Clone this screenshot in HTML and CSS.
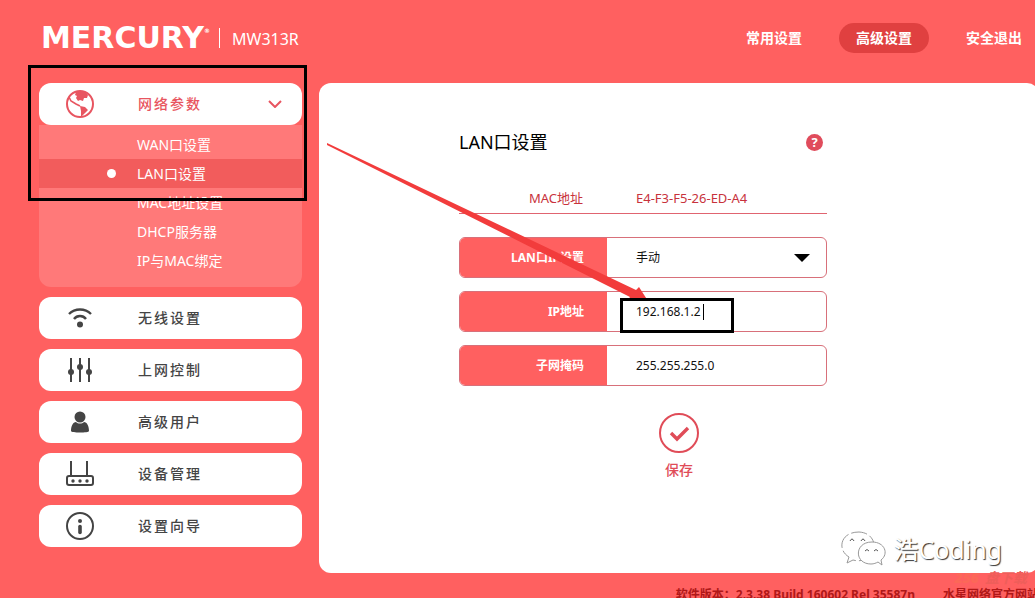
FILE: index.html
```
<!DOCTYPE html>
<html lang="zh-CN">

<head>
    <meta charset="UTF-8">
    <title>MW313R</title>
    <link rel="stylesheet" href="styles.css">
</head>

<body>
    <div class="page">
        <header class="header">
            <div class="logo">MERCURY<span class="reg">®</span></div>
            <span class="model">MW313R</span>
            <nav class="nav">
                <a href="#">常用设置</a>
                <a href="#" class="active">高级设置</a>
                <a href="#">安全退出</a>
            </nav>
        </header>

        <main class="container">
            <aside class="sidebar">
                <div class="group">
                    <button class="menu-item open">
                        <svg class="icon" viewBox="0 0 30 30">
                            <circle cx="15" cy="15" r="13" fill="none" stroke="currentColor" stroke-width="2" />
                            <path d="M11 3l8-1 4 4-1 3-3 0-1 3-3-1-2 1-2-3 1-2-2-1z" fill="currentColor" />
                            <path d="M4 8l2 4 5 3 4 2" fill="none" stroke="currentColor" stroke-width="1.600" />
                            <path d="M15 17l5 1 3 3-3 3-4 4 0-6z" fill="currentColor" />
                        </svg>
                        <span>网络参数</span>
                        <svg class="chevron" viewBox="0 0 14 8">
                            <path d="M1 1l6 6 6-6" fill="none" stroke="currentColor" stroke-width="2" />
                        </svg>
                    </button>
                    <ul class="submenu">
                        <li><a href="#">WAN口设置</a></li>
                        <li class="current"><a href="#">LAN口设置</a></li>
                        <li><a href="#">MAC地址设置</a></li>
                        <li><a href="#">DHCP服务器</a></li>
                        <li><a href="#">IP与MAC绑定</a></li>
                    </ul>
                </div>
                <button class="menu-item">
                    <svg class="icon" viewBox="0 0 30 30">
                        <path d="M4 11c6-6 16-6 22 0M9 16c3-4 9-4 12 0" fill="none" stroke="currentColor" stroke-width="2.400" />
                        <circle cx="15" cy="21.500" r="3" fill="currentColor" />
                    </svg>
                    <span>无线设置</span>
                </button>
                <button class="menu-item">
                    <svg class="icon" viewBox="0 0 30 30">
                        <path d="M6 3v24M15 3v24M24 3v24" stroke="currentColor" stroke-width="2" />
                        <circle cx="6" cy="17" r="3" fill="currentColor" />
                        <circle cx="15" cy="12" r="3" fill="currentColor" />
                        <circle cx="24" cy="17" r="3" fill="currentColor" />
                    </svg>
                    <span>上网控制</span>
                </button>
                <button class="menu-item">
                    <svg class="icon" viewBox="0 0 30 30">
                        <circle cx="15" cy="10" r="5.500" fill="currentColor" />
                        <path d="M6 24c0-5 2-9 5-9 2 2 6 2 8 0 3 0 5 4 5 9 0 2-18 2-18 0z" fill="currentColor" />
                    </svg>
                    <span>高级用户</span>
                </button>
                <button class="menu-item">
                    <svg class="icon" viewBox="0 0 30 30">
                        <path d="M6 2v15M22 2v15" stroke="currentColor" stroke-width="2" />
                        <rect x="2" y="17" width="26" height="9" rx="2" fill="none" stroke="currentColor" stroke-width="2" />
                        <circle cx="8" cy="22" r="1.700" fill="currentColor" />
                        <circle cx="15" cy="22" r="1.700" fill="currentColor" />
                        <circle cx="22" cy="22" r="1.700" fill="currentColor" />
                    </svg>
                    <span>设备管理</span>
                </button>
                <button class="menu-item">
                    <svg class="icon" viewBox="0 0 30 30">
                        <circle cx="15" cy="15" r="13" fill="none" stroke="currentColor" stroke-width="2" />
                        <circle cx="15" cy="10" r="2" fill="currentColor" />
                        <path d="M15 15.500v6" stroke="currentColor" stroke-width="3.600" stroke-linecap="round" />
                    </svg>
                    <span>设置向导</span>
                </button>
            </aside>

            <section class="panel">
                <form>
                    <div class="fields">
                        <div class="title">
                            <h1>LAN口设置</h1>
                            <button type="button" class="help" aria-label="帮助">?</button>
                        </div>
                        <div class="mac">
                            <span class="label">MAC地址</span>
                            <span class="value">E4-F3-F5-26-ED-A4</span>
                        </div>
                        <div class="field">
                            <label for="lanType">LAN口IP设置</label>
                            <select id="lanType">
                                <option>手动</option>
                                <option>自动</option>
                            </select>
                            <svg class="caret" viewBox="0 0 16 8">
                                <path d="M0 0h16L8 8z" />
                            </svg>
                        </div>
                        <div class="field">
                            <label for="lanIp">IP地址</label>
                            <input type="text" id="lanIp" value="192.168.1.2">
                        </div>
                        <div class="field">
                            <label for="lanMask">子网掩码</label>
                            <input type="text" id="lanMask" value="255.255.255.0">
                        </div>
                    </div>
                    <button type="button" class="save">
                        <svg viewBox="0 0 40 40">
                            <circle cx="20" cy="20" r="19" fill="none" stroke="currentColor" stroke-width="2" />
                            <path d="M12 20l6 6 11-11" fill="none" stroke="currentColor" stroke-width="3.400" />
                        </svg>
                        <span>保存</span>
                    </button>
                </form>
            </section>
        </main>

        <footer class="footer">
            <span>软件版本：2.3.38 Build 160602 Rel 35587n</span>
            <a href="#">水星网络官方网站</a>
        </footer>

        <!-- 标注 -->
        <svg class="notes" width="1035" height="598" viewBox="0 0 1035 598">
            <path d="M327 143L636 290l3-3 9 14h-21l3-4L327 145z" fill="#f23c3c" />
            <rect x="29.500" y="66.500" width="276" height="133" fill="none" stroke="#000" stroke-width="3" />
            <rect x="621.500" y="299.500" width="111" height="32" fill="none" stroke="#000" stroke-width="3" />
            <path d="M703.500 304v16" stroke="#000" />
        </svg>

        <!-- 水印 -->
        <div class="watermark">
            <svg viewBox="0 0 46 36">
                <g fill="#fff" stroke="#999" stroke-width="1">
                    <path d="M8 26l-2 6 6-3c3 1 7 1 10 0 16-4 15-27-4-28C-1 1-4 19 8 26z" stroke-dasharray="16 3" />
                    <path d="M37 31l4 3-1-5c8-6 4-18-9-18-18 0-18 22-1 22 3 0 5-1 7-2z" />
                </g>
                <path d="M9 10q2-4 4 0M20 10q2-4 4 0M24 20q2-3 4 0M33 20q2-3 4 0" fill="none" stroke="#555" />
            </svg>
            <span>浩Coding</span>
        </div>
        <div class="stamp"><b>256</b>盘下载</div>
    </div>
</body>

</html>
```
FILE: styles.css
```
* {
    box-sizing: border-box;
}

body {
    margin: 0;
    background-color: #ff6060;
    font-family: "Noto Sans", "Noto Sans CJK SC", sans-serif;
    font-size: 14px;
}

button,
input,
select {
    font-family: inherit;
    border: none;
    background: none;
    padding: 0;
}

a {
    color: inherit;
    text-decoration: none;
}

.page {
    position: relative;
    height: 100vh;
    overflow: hidden;
}

/* 顶部 */
.header {
    display: flex;
    align-items: center;
    height: 83px;
    padding: 0 0 7px 41px;
    margin-right: -4px;
    color: #fff;
}

.logo {
    display: flex;
    font-family: "DejaVu Sans", sans-serif;
    font-weight: bold;
    font-size: 30px;
    line-height: 30px;
}

.reg {
    font-size: 6px;
    line-height: 16px;
}

.model {
    margin-left: 9px;
    padding: 3px 0 0 12px;
    border-left: 1px solid #fff;
    font-size: 16px;
    line-height: 17px;
}

.nav {
    display: flex;
    gap: 20px;
    margin-left: auto;
}

.nav a {
    padding: 0 17px;
    border-radius: 15px;
    font-weight: bold;
    line-height: 30px;
}

.nav .active {
    background-color: #e04040;
}

.container {
    display: flex;
    gap: 17px;
    padding-left: 39px;
    margin-right: -4px;
}

/* 左侧菜单 */
.sidebar {
    display: flex;
    flex-direction: column;
    gap: 10px;
    flex: 0 0 263px;
}

.menu-item {
    display: flex;
    align-items: center;
    width: 100%;
    height: 42px;
    padding: 0 20px 0 26px;
    border-radius: 12px;
    background-color: #fff;
    color: #444;
    font-size: 14px;
    font-weight: 500;
    line-height: 20px;
    letter-spacing: 2px;
    cursor: pointer;
}

.menu-item.open {
    color: #e85560;
}

.icon {
    width: 30px;
    height: 30px;
    margin-right: 43px;
}

.chevron {
    width: 14px;
    height: 8px;
    margin-left: auto;
}

.submenu {
    margin: 0;
    padding: 5px 0 12px;
    list-style: none;
    background-color: #ff7979;
    border-radius: 0 0 12px 12px;
    color: #fff;
}

.submenu li {
    display: flex;
    align-items: center;
    padding-left: 98px;
    line-height: 29px;
}

.submenu .current {
    padding-left: 68px;
    background-color: #f25c5c;
}

.submenu .current::before {
    content: "";
    width: 9px;
    height: 9px;
    margin-right: 21px;
    border-radius: 50%;
    background-color: #fff;
}

/* 右侧内容 */
.panel {
    flex: 1;
    padding: 46px 0 93px;
    border-radius: 12px;
    background-color: #fff;
}

.fields {
    display: flex;
    flex-direction: column;
    gap: 13px;
    width: 368px;
    margin-left: 140px;
}

.title {
    display: flex;
    align-items: center;
    justify-content: space-between;
    padding-right: 4px;
}

.title h1 {
    margin: 0;
    font-size: 18px;
    font-weight: normal;
    line-height: 26px;
}

.help {
    width: 17px;
    height: 17px;
    border-radius: 50%;
    background-color: #e04c5c;
    color: #fff;
    font-size: 13px;
    font-weight: bold;
    line-height: 17px;
}

.mac {
    display: flex;
    margin: 16px 0 10px;
    border-bottom: 1px solid #e06470;
    color: #c8323c;
    font-size: 13px;
    line-height: 29px;
}

.mac .label {
    width: 148px;
    padding-right: 24px;
    text-align: right;
}

.mac .value {
    padding-left: 29px;
}

.field {
    display: flex;
    align-items: center;
    height: 41px;
    border: 1px solid #d8707a;
    border-radius: 6px;
    overflow: hidden;
}

.field label {
    flex: 0 0 147px;
    padding-right: 23px;
    background-color: #ff6060;
    color: #fff;
    font-size: 12px;
    font-weight: bold;
    line-height: 41px;
    text-align: right;
}

.field input,
.field select {
    flex: 1;
    min-width: 0;
    height: 39px;
    padding-left: 29px;
    color: #111;
    font-size: 12px;
    outline: none;
    appearance: none;
}

.caret {
    width: 16px;
    height: 8px;
    margin-right: 16px;
    pointer-events: none;
}

.save {
    display: flex;
    flex-direction: column;
    align-items: center;
    gap: 7px;
    margin: 27px auto 0;
    color: #e04c58;
    font-size: 14px;
    font-weight: 500;
    line-height: 20px;
    cursor: pointer;
}

.save svg {
    width: 40px;
    height: 40px;
}

/* 底部 */
.footer {
    display: flex;
    gap: 28px;
    justify-content: flex-end;
    margin-right: -4px;
    padding-top: 13px;
    color: #b01818;
    font-size: 12px;
    font-weight: bold;
    line-height: 18px;
    white-space: nowrap;
}

.notes {
    position: absolute;
    top: 0;
    left: 0;
    pointer-events: none;
}

.watermark {
    position: absolute;
    right: 33px;
    bottom: 29px;
    display: flex;
    align-items: center;
    gap: 6px;
    color: #fff;
    font-size: 25px;
    line-height: 40px;
    text-shadow: 1px 1px 1px #333;
}

.watermark svg {
    width: 46px;
    height: 36px;
}

.stamp {
    position: absolute;
    right: 8px;
    bottom: 10px;
    color: #ee5e5a;
    font-size: 14px;
    font-style: italic;
    font-weight: bold;
    line-height: 20px;
}

.stamp b {
    margin-right: 6px;
    color: #fc6858;
}
```
